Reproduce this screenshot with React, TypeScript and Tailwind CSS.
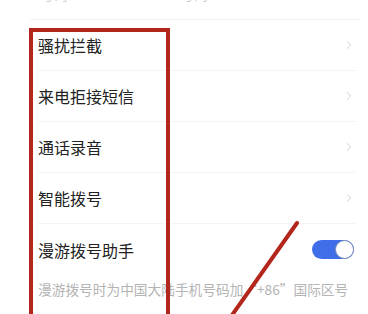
import { ChevronRight } from "lucide-react";

const rows = ["骚扰拦截", "来电拒接短信", "通话录音", "智能拨号"];

export default function App() {
  return (
    <div
      className="relative h-[314px] w-[368px] overflow-hidden bg-white"
      style={{ fontFamily: '"Noto Sans CJK SC", "Liberation Sans", sans-serif' }}
    >
      {/* cut-off row at the top */}
      <div className="relative h-[20px] border-b border-[#f3f3f3] ml-[30px] mr-[8px]">
        <span className="absolute left-[10px] top-[-16px] text-[14px] text-[#cfcfcf]">号码</span>
        <span className="absolute left-[150px] top-[-16px] text-[14px] text-[#cfcfcf]">号码</span>
      </div>

      <div className="pl-[38px] pr-[12px]">
        {rows.map((label) => (
          <div key={label} className="flex h-[51px] items-center justify-between border-b border-[#f4f4f4]">
            <span className="text-[16px] leading-none text-[#222]">{label}</span>
            <ChevronRight className="h-[14px] w-[14px] text-[#c9c9c9]" strokeWidth={1.5} />
          </div>
        ))}
        <div className="flex h-[51px] items-center justify-between">
          <span className="text-[16px] leading-none text-[#222]">漫游拨号助手</span>
          <div className="mr-[2px] flex h-[19px] w-[42px] items-center justify-end rounded-full bg-[#3f6ee8]">
            <div className="h-[19px] w-[19px] rounded-full border border-[#7d8fb8] bg-white" />
          </div>
        </div>
        <p className="mt-[8px] whitespace-nowrap text-[13.7px] leading-none text-[#b4b4b4]">
          漫游拨号时为中国大陆手机号码加“+86”国际区号
        </p>
      </div>

      {/* annotation box */}
      <div className="absolute left-[29px] top-[28px] h-[320px] w-[141px] border-[4px] border-[#b3261c]" />
      {/* annotation line */}
      <svg className="absolute left-0 top-0" width="368" height="314" viewBox="0 0 368 314">
        <line x1="297" y1="223" x2="230" y2="318" stroke="#b3261c" strokeWidth="4" strokeLinecap="round" />
      </svg>
    </div>
  );
}
